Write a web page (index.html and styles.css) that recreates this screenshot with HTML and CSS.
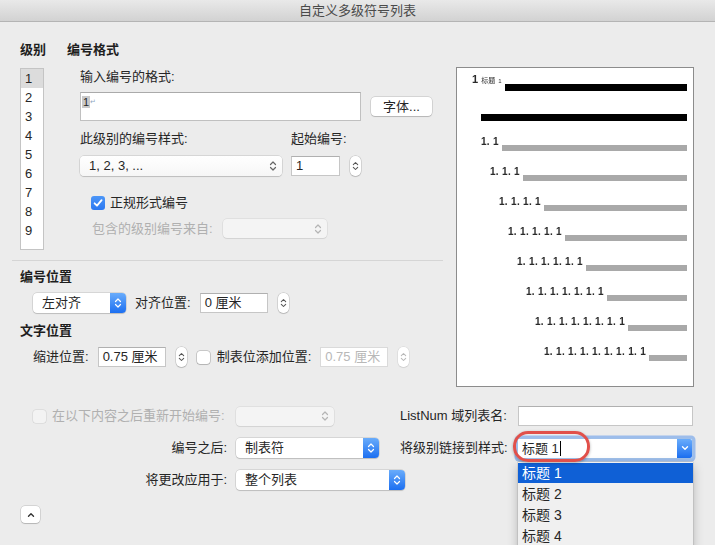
FILE: index.html
```html
<!DOCTYPE html>
<html lang="zh-CN">
  <head>
    <meta charset="UTF-8" />
    <meta name="viewport" content="width=device-width, initial-scale=1.0" />
    <title>自定义多级符号列表</title>
    <link rel="stylesheet" href="styles.css">
  </head>
  <body>
    <div class="window">
      <div class="titlebar">自定义多级符号列表</div>

      <div class="top">
        <div class="left">
          <div class="levels-row">
            <!-- level list -->
            <div class="levels">
              <div class="heading">级别</div>
              <div class="level-list">
                <div class="level selected">1</div>
                <div class="level">2</div>
                <div class="level">3</div>
                <div class="level">4</div>
                <div class="level">5</div>
                <div class="level">6</div>
                <div class="level">7</div>
                <div class="level">8</div>
                <div class="level">9</div>
              </div>
            </div>

            <!-- number format -->
            <div class="format">
              <div class="heading format-heading">编号格式</div>
              <div class="label enter-label">输入编号的格式:</div>
              <div class="format-row">
                <div class="format-input"><span class="sel">1</span><span class="ret">↵</span></div>
                <button class="btn font-btn">字体...</button>
              </div>
              <div class="style-row">
                <div class="style-col">
                  <div class="label">此级别的编号样式:</div>
                  <div class="popup style-popup">
                    <span>1, 2, 3, ...</span>
                    <svg class="ud" width="8" height="14" viewBox="0 0 8 14"><path d="M1.5 5.5 4 3 6.5 5.5M1.5 8.5 4 11 6.5 8.5"/></svg>
                  </div>
                </div>
                <div class="start-col">
                  <div class="label">起始编号:</div>
                  <div class="control-row">
                    <div class="field start-field">1</div>
                    <div class="stepper"><svg class="ud" width="7" height="14" viewBox="0 0 8 14"><path d="M1.5 5.5 4 3 6.5 5.5M1.5 8.5 4 11 6.5 8.5"/></svg></div>
                  </div>
                </div>
              </div>
              <div class="check-row legal-row">
                <span class="checkbox checked"><svg width="14" height="14" viewBox="0 0 14 14"><path d="M3.6 7.3 6 9.7 10.6 4.2"/></svg></span>
                <span>正规形式编号</span>
              </div>
              <div class="include-row">
                <span class="disabled-text">包含的级别编号来自:</span>
                <div class="popup disabled include-popup">
                  <span></span>
                  <svg class="ud" width="8" height="14" viewBox="0 0 8 14"><path d="M1.5 5.5 4 3 6.5 5.5M1.5 8.5 4 11 6.5 8.5"/></svg>
                </div>
              </div>
            </div>
          </div>

          <div class="separator"></div>

          <div class="heading section-heading">编号位置</div>
          <div class="pos-row">
            <div class="popup blue align-popup">
              <span>左对齐</span>
              <span class="blue-arrow"><svg class="ud" width="8" height="14" viewBox="0 0 8 14"><path d="M1.5 5.5 4 3 6.5 5.5M1.5 8.5 4 11 6.5 8.5"/></svg></span>
            </div>
            <span class="label">对齐位置:</span>
            <div class="field cm-field">0 厘米</div>
            <div class="stepper"><svg class="ud" width="7" height="14" viewBox="0 0 8 14"><path d="M1.5 5.5 4 3 6.5 5.5M1.5 8.5 4 11 6.5 8.5"/></svg></div>
          </div>

          <div class="heading section-heading">文字位置</div>
          <div class="pos-row">
            <span class="label">缩进位置:</span>
            <div class="field cm-field">0.75 厘米</div>
            <div class="stepper"><svg class="ud" width="7" height="14" viewBox="0 0 8 14"><path d="M1.5 5.5 4 3 6.5 5.5M1.5 8.5 4 11 6.5 8.5"/></svg></div>
            <span class="checkbox tab-check"></span>
            <span class="label">制表位添加位置:</span>
            <div class="field cm-field disabled">0.75 厘米</div>
            <div class="stepper disabled"><svg class="ud" width="7" height="14" viewBox="0 0 8 14"><path d="M1.5 5.5 4 3 6.5 5.5M1.5 8.5 4 11 6.5 8.5"/></svg></div>
          </div>
        </div>

        <!-- preview -->
        <div class="preview">
          <div class="prow first">
            <span class="ptext">1 <small>标题</small> <small class="tiny">1</small></span>
            <span class="bar black"></span>
          </div>
          <div class="prow i1"><span class="bar black thick"></span></div>
          <div class="prow i1"><span class="ptext">1. 1</span><span class="bar"></span></div>
          <div class="prow i2"><span class="ptext">1. 1. 1</span><span class="bar"></span></div>
          <div class="prow i3"><span class="ptext">1. 1. 1. 1</span><span class="bar"></span></div>
          <div class="prow i4"><span class="ptext">1. 1. 1. 1. 1</span><span class="bar"></span></div>
          <div class="prow i5"><span class="ptext">1. 1. 1. 1. 1. 1</span><span class="bar"></span></div>
          <div class="prow i6"><span class="ptext">1. 1. 1. 1. 1. 1. 1</span><span class="bar"></span></div>
          <div class="prow i7"><span class="ptext">1. 1. 1. 1. 1. 1. 1. 1</span><span class="bar"></span></div>
          <div class="prow i8"><span class="ptext">1. 1. 1. 1. 1. 1. 1. 1. 1</span><span class="bar"></span></div>
        </div>
      </div>

      <div class="bottom">
        <div class="cell-label disabled-text restart">
          <span class="checkbox disabled"></span>
          <span>在以下内容之后重新开始编号:</span>
        </div>
        <div class="popup disabled restart-popup">
          <span></span>
          <svg class="ud" width="8" height="14" viewBox="0 0 8 14"><path d="M1.5 5.5 4 3 6.5 5.5M1.5 8.5 4 11 6.5 8.5"/></svg>
        </div>
        <div class="side-label">ListNum 域列表名:</div>
        <div class="field listnum-field"></div>

        <div class="cell-label">编号之后:</div>
        <div class="popup blue after-popup">
          <span>制表符</span>
          <span class="blue-arrow"><svg class="ud" width="8" height="14" viewBox="0 0 8 14"><path d="M1.5 5.5 4 3 6.5 5.5M1.5 8.5 4 11 6.5 8.5"/></svg></span>
        </div>
        <div class="side-label">将级别链接到样式:</div>
        <div class="combo">
          <span class="combo-text">标题 1<span class="caret"></span></span>
          <span class="combo-arrow"><svg width="10" height="10" viewBox="0 0 10 10"><path d="M2.5 3.8 5 6.3 7.5 3.8"/></svg></span>
        </div>

        <div class="cell-label">将更改应用于:</div>
        <div class="popup blue apply-popup">
          <span>整个列表</span>
          <span class="blue-arrow"><svg class="ud" width="8" height="14" viewBox="0 0 8 14"><path d="M1.5 5.5 4 3 6.5 5.5M1.5 8.5 4 11 6.5 8.5"/></svg></span>
        </div>
      </div>

      <button class="btn disclosure"><svg width="10" height="8" viewBox="0 0 10 8"><path d="M2.5 5.2 5 2.7 7.5 5.2"/></svg></button>

      <!-- open style menu -->
      <div class="menu">
        <div class="menu-item active">标题 1</div>
        <div class="menu-item">标题 2</div>
        <div class="menu-item">标题 3</div>
        <div class="menu-item">标题 4</div>
      </div>

      <div class="highlight"></div>
    </div>
  </body>
</html>
```

FILE: styles.css
```css
* {
  margin: 0;
  padding: 0;
  box-sizing: border-box;
}

body {
  width: 715px;
  height: 545px;
  overflow: hidden;
  background: #ececec;
  font-family: 'Liberation Sans', 'Noto Sans CJK SC', sans-serif;
  font-size: 13px;
  line-height: 16px;
  color: #262626;
}

.window {
  position: relative;
  width: 715px;
  height: 545px;
}

.titlebar {
  height: 22px;
  line-height: 21px;
  text-align: center;
  color: #4a4a4a;
  background: linear-gradient(#e9e9e9, #d2d2d2);
  border-bottom: 1px solid #b4b4b4;
}

/* ---------- top part ---------- */

.top {
  display: flex;
  padding-left: 12px;
}

.left {
  width: 431px;
  padding-top: 20px;
}

.levels-row {
  display: flex;
  padding-left: 8px;
}

.heading {
  font-weight: 700;
  color: #1e1e1e;
  height: 16px;
}

.levels {
  width: 47px;
}

.level-list {
  margin-top: 10px;
  width: 24px;
  height: 182px;
  background: #fff;
  border: 1px solid #c4c4c4;
}

.level {
  height: 19px;
  line-height: 19px;
  padding-left: 4px;
}

.level.selected {
  background: #dcdcdc;
}

.format {
  flex: 1;
  padding-left: 13px;
}

.format-heading {
  margin-left: -13px;
}

.label {
  height: 16px;
  white-space: nowrap;
}

.enter-label {
  margin-top: 11px;
}

.format-row {
  display: flex;
  align-items: center;
  margin-top: 7px;
}

.format-input {
  width: 281px;
  height: 29px;
  background: #fff;
  border: 1px solid #c0c0c0;
  border-top-color: #aaa;
  padding: 3px 1px;
  line-height: 12px;
  font-size: 11px;
}

.format-input .sel {
  background: #c9c9c9;
  padding: 0 1px;
}

.format-input .ret {
  font-size: 7px;
  color: #8fa6c0;
  vertical-align: top;
}

.btn {
  font-family: inherit;
  font-size: 13px;
  color: #262626;
  background: #fff;
  border: none;
  border-radius: 4px;
  box-shadow: 0 0 0 0.5px rgba(0, 0, 0, 0.2), 0 1px 1px rgba(0, 0, 0, 0.14);
}

.font-btn {
  margin-left: 10px;
  width: 61px;
  height: 19px;
  line-height: 19px;
}

.style-row {
  display: flex;
  margin-top: 10px;
}

.style-col {
  width: 202px;
}

.start-col {
  margin-left: 9px;
}

.style-col .popup,
.start-col .control-row {
  margin-top: 9px;
}

.control-row {
  display: flex;
  align-items: center;
}

.popup {
  display: flex;
  align-items: center;
  justify-content: space-between;
  height: 19px;
  padding: 0 5px 0 9px;
  background: #fff;
  border-radius: 4px;
  box-shadow: 0 0 0 0.5px rgba(0, 0, 0, 0.18), 0 1px 1px rgba(0, 0, 0, 0.12);
  white-space: nowrap;
  color: #666;
}

.popup span:first-child {
  color: #262626;
}

.ud path {
  fill: none;
  stroke: currentColor;
  stroke-width: 1.2;
  stroke-linecap: round;
  stroke-linejoin: round;
}

.style-popup {
  width: 202px;
  height: 20px;
  background: linear-gradient(#fff, #f6f6f6);
}

.popup.disabled {
  background: #f4f4f4;
  color: #b4b4b4;
  box-shadow: 0 0 0 0.5px rgba(0, 0, 0, 0.1), 0 1px 1px rgba(0, 0, 0, 0.06);
}

.popup.blue {
  padding-right: 0;
}

.blue-arrow {
  width: 16px;
  height: 100%;
  display: flex;
  align-items: center;
  justify-content: center;
  color: #fff;
  border-radius: 0 4px 4px 0;
  background: linear-gradient(#69acfb, #1c6ff1);
}

.field {
  height: 20px;
  line-height: 18px;
  padding: 0 4px;
  background: #fff;
  border: 1px solid #c6c6c6;
  border-top-color: #b0b0b0;
  white-space: nowrap;
}

.field.disabled {
  color: #b8b8b8;
  border-color: #dadada;
}

.start-field {
  width: 49px;
}

.stepper {
  width: 11px;
  height: 20px;
  margin-left: 10px;
  display: flex;
  align-items: center;
  justify-content: center;
  color: #555;
  background: #fff;
  border-radius: 5px;
  box-shadow: 0 0 0 0.5px rgba(0, 0, 0, 0.2), 0 1px 1px rgba(0, 0, 0, 0.12);
}

.stepper.disabled {
  color: #b8b8b8;
  box-shadow: 0 0 0 0.5px rgba(0, 0, 0, 0.1), 0 1px 1px rgba(0, 0, 0, 0.06);
}

.check-row {
  display: flex;
  align-items: center;
  gap: 5px;
  height: 16px;
}

.legal-row {
  margin-top: 19px;
  padding-left: 11px;
}

.checkbox {
  display: inline-block;
  width: 13px;
  height: 13px;
  background: #fff;
  border-radius: 3px;
  box-shadow: 0 0 0 0.5px rgba(0, 0, 0, 0.3), 0 1px 1px rgba(0, 0, 0, 0.1);
  flex-shrink: 0;
}

.checkbox.checked {
  width: 14px;
  height: 14px;
  background: linear-gradient(#4c96f8, #2b78f1);
  box-shadow: none;
}

.checkbox.checked svg {
  display: block;
}

.checkbox.checked path {
  fill: none;
  stroke: #fff;
  stroke-width: 1.8;
  stroke-linecap: round;
  stroke-linejoin: round;
}

.checkbox.disabled {
  background: #f3f3f3;
  box-shadow: 0 0 0 0.5px rgba(0, 0, 0, 0.12);
}

.include-row {
  display: flex;
  align-items: center;
  height: 19px;
  margin-top: 8px;
  padding-left: 12px;
}

.disabled-text {
  color: #b0b0b0;
}

.include-popup {
  width: 104px;
  margin-left: 10px;
}

.separator {
  height: 1px;
  margin-top: 10px;
  background: #d5d5d5;
}

.section-heading {
  margin-top: 8px;
  padding-left: 8px;
}

.section-heading + .pos-row {
  margin-top: 8px;
}

.pos-row + .section-heading {
  margin-top: 10px;
}

.pos-row {
  display: flex;
  align-items: center;
  gap: 9px;
  height: 20px;
  padding-left: 21px;
}

.pos-row .stepper {
  margin-left: 1px;
}

.align-popup {
  width: 93px;
  height: 20px;
}

.cm-field {
  width: 68px;
}

.tab-check {
  margin-left: 1px;
  margin-right: -2px;
}

/* ---------- preview ---------- */

.preview {
  width: 238px;
  height: 320px;
  margin: 45px 0 0 13px;
  padding: 0 6px 0 15px;
  background: #fff;
  border: 1px solid #8c8c8c;
  will-change: transform;
}

.prow {
  display: flex;
  align-items: flex-end;
  gap: 3px;
  height: 30px;
}

.prow.first {
  height: 23px;
  gap: 3px;
}

.ptext {
  font-size: 10px;
  font-weight: 700;
  line-height: 12px;
  letter-spacing: 0.3px;
  margin-bottom: 3px;
  color: #2a2a2a;
  white-space: nowrap;
}

.prow.first .ptext {
  font-size: 11px;
  letter-spacing: 0;
  margin-bottom: 4px;
}

.prow.first small {
  font-size: 7px;
  font-weight: 400;
  color: #333;
}

.prow.first .tiny {
  font-size: 6px;
}

.bar {
  flex: 1;
  height: 6px;
  background: #a9a9a9;
}

.bar.black {
  height: 7px;
  background: #000;
}

.i1 { padding-left: 9px; }
.i2 { padding-left: 18px; }
.i3 { padding-left: 27px; }
.i4 { padding-left: 36px; }
.i5 { padding-left: 45px; }
.i6 { padding-left: 54px; }
.i7 { padding-left: 63px; }
.i8 { padding-left: 72px; }

/* ---------- bottom part ---------- */

.bottom {
  display: grid;
  grid-template-columns: 224px 164px 118px 176px;
  grid-auto-rows: 20px;
  row-gap: 12px;
  margin-top: 19px;
  padding-left: 12px;
  align-items: center;
}

.cell-label {
  justify-self: end;
  margin-right: 9px;
  white-space: nowrap;
}

.restart {
  justify-self: start;
  margin-left: 21px;
  display: flex;
  align-items: center;
  gap: 6px;
}

.restart-popup {
  width: 98px;
}

.after-popup {
  width: 143px;
  height: 20px;
}

.apply-popup {
  grid-column: span 2;
  width: 169px;
  height: 20px;
}

.side-label {
  white-space: nowrap;
}

.listnum-field {
  width: 175px;
}

.combo {
  display: flex;
  width: 176px;
  height: 21px;
  margin-left: -1px;
  background: #fff;
  border: 1px solid #9fbfe9;
  border-radius: 2px;
  box-shadow: 0 0 0 2.5px rgba(92, 152, 235, 0.55);
}

.combo-text {
  flex: 1;
  padding-left: 4px;
  line-height: 19px;
}

.caret {
  display: inline-block;
  width: 1px;
  height: 15px;
  margin-left: 1px;
  vertical-align: -3px;
  background: #000;
}

.combo-arrow {
  width: 15px;
  display: flex;
  align-items: center;
  justify-content: center;
  background: linear-gradient(#69acfb, #1c6ff1);
  border-radius: 0 2px 2px 0;
}

.combo-arrow path,
.disclosure path {
  fill: none;
  stroke: #fff;
  stroke-width: 1.4;
  stroke-linecap: round;
  stroke-linejoin: round;
}

.disclosure {
  display: flex;
  align-items: center;
  justify-content: center;
  width: 19px;
  height: 17px;
  margin: 16px 0 0 21px;
}

.disclosure path {
  stroke: #333;
}

/* open menu over the form */
.menu {
  position: absolute;
  left: 518px;
  top: 462px;
  width: 175px;
  height: 100px;
  padding-top: 1px;
  background: #f0f0f0;
  box-shadow: 0 0 0 0.5px rgba(0, 0, 0, 0.15), 0 4px 10px rgba(0, 0, 0, 0.25);
}

.menu-item {
  height: 21px;
  line-height: 21px;
  padding-left: 4px;
  font-size: 14px;
}

.menu-item.active {
  height: 20px;
  line-height: 20px;
  margin-bottom: 1px;
  color: #fff;
  background: #0f60d6;
}

.highlight {
  position: absolute;
  left: 513px;
  top: 431px;
  width: 77px;
  height: 31px;
  border: 3px solid #e1504a;
  border-radius: 15px;
  box-shadow: 0 1px 3px rgba(0, 0, 0, 0.3);
}
```
